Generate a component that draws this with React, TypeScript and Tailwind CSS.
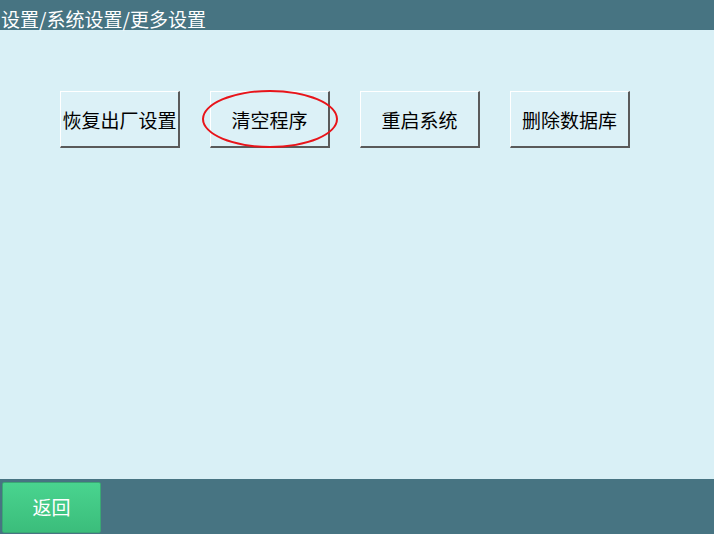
import React from 'react';

const font = { fontFamily: '"Noto Sans CJK SC", "Liberation Sans", sans-serif' };

const actions = ['恢复出厂设置', '清空程序', '重启系统', '删除数据库'];

function ActionButton({ label, marked }: { label: string; marked?: boolean }) {
  return (
    <div className="relative">
      <button className="w-[120px] h-[57px] bg-[#dcf1f7] border-t border-l border-t-white border-l-white border-r-2 border-b-2 border-r-[#5a5a5a] border-b-[#5a5a5a] text-[19px] text-black leading-none whitespace-nowrap">
        {label}
      </button>
      {marked && (
        <div className="absolute left-[-8px] top-[-1px] w-[136px] h-[58px] rounded-[50%] border-2 border-[#e8141a] pointer-events-none" />
      )}
    </div>
  );
}

export default function App() {
  return (
    <div className="w-[714px] h-[534px] flex flex-col bg-[#d9f0f6] overflow-hidden" style={font}>
      <div className="h-[30px] bg-[#477482] text-white text-[19px] leading-[22px] pt-[8px] pl-[1px] whitespace-nowrap">
        设置/系统设置/更多设置
      </div>
      <div className="flex-1 flex items-start gap-[30px] pl-[60px] pt-[61px]">
        {actions.map((a, i) => (
          <ActionButton key={a} label={a} marked={i === 1} />
        ))}
      </div>
      <div className="h-[55px] bg-[#477482] flex items-center pl-[2px]">
        <button className="w-[99px] h-[51px] mt-[2px] rounded-[2px] bg-gradient-to-b from-[#49d48f] to-[#3bbd7b] border border-[#3aa874] text-white text-[19px]">
          返回
        </button>
      </div>
    </div>
  );
}
